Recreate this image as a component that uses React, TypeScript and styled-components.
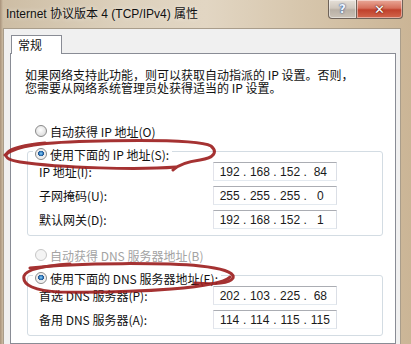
import React from 'react'
import styled, { createGlobalStyle } from 'styled-components'

const GlobalStyle = createGlobalStyle`
  html, body {
    margin: 0;
    padding: 0;
  }
  body {
    width: 411px;
    height: 344px;
    overflow: hidden;
    background: #d8c9b2;
  }
`

const cjk = `"Noto Sans CJK SC", "Noto Sans", sans-serif`

const Window = styled.div`
  position: relative;
  width: 411px;
  height: 344px;
  overflow: hidden;
  display: flex;
  flex-direction: column;
  font-family: ${cjk};
  background: linear-gradient(90deg, #a8927a 0px, #cdbda4 3px, #ddd1bd 30%, #e2d6c3 50%, #d6c5ab 75%, #cbb596 100%);
`

const TitleBar = styled.div`
  flex: none;
  height: 28px;
  display: flex;
  align-items: flex-start;
`

const Title = styled.div`
  flex: 1;
  padding-left: 6px;
  font-family: "Liberation Sans", ${cjk};
  font-size: 12px;
  line-height: 28px;
  color: #111;
  white-space: nowrap;
  text-shadow: 0 0 5px rgba(255, 255, 255, 0.7);
`

const CaptionButtons = styled.div`
  display: flex;
  margin-right: 8px;
`

const CaptionButton = styled.div<{ $close?: boolean }>`
  width: ${p => (p.$close ? 46 : 29)}px;
  height: 19px;
  box-sizing: border-box;
  display: flex;
  align-items: center;
  justify-content: center;
  border: 1px solid #6e6258;
  border-top: none;
  border-left: ${p => (p.$close ? 'none' : '1px solid #6e6258')};
  border-radius: ${p => (p.$close ? '0 0 4px 0' : '0 0 0 4px')};
  background: ${p =>
    p.$close
      ? 'linear-gradient(180deg, #e9a898 0%, #d6705c 45%, #c0412c 55%, #d2664c 100%)'
      : 'linear-gradient(180deg, #e6e0d8 0%, #cfc7bd 45%, #b9b0a5 55%, #cbc3b8 100%)'};
  box-shadow: inset 0 0 0 1px rgba(255, 255, 255, 0.45);
  font-family: "DejaVu Sans", sans-serif;
  font-weight: bold;
  font-size: ${p => (p.$close ? 13 : 12)}px;
  color: ${p => (p.$close ? '#fff' : '#eef4ff')};
  text-shadow: ${p =>
    p.$close
      ? '0 0 2px #5a1a10, 0 0 1px #5a1a10'
      : '0 0 2px #2b4f8c, 0 0 1px #2b4f8c'};
`

const Client = styled.div`
  flex: 1;
  margin-left: 3px;
  width: 398px;
  box-sizing: border-box;
  display: flex;
  flex-direction: column;
  padding: 6px 0 0 6px;
  background: #f0f0f0;
  border: 1px solid #a99d8b;
  border-bottom: none;
`

const TabStrip = styled.div`
  display: flex;
  padding-left: 1px;
`

const Tab = styled.div`
  position: relative;
  z-index: 1;
  width: 51px;
  height: 19px;
  box-sizing: border-box;
  margin-bottom: -1px;
  padding-left: 6px;
  border: 1px solid #898c95;
  border-bottom: none;
  background: #fff;
  font-size: 12px;
  line-height: 18px;
  color: #111;
`

const Panel = styled.div`
  flex: 1;
  width: 386px;
  box-sizing: border-box;
  padding: 14px 0 0 14px;
  border: 1px solid #898c95;
  background: #fff;
`

const Intro = styled.p`
  margin: 0;
  font-size: 12px;
  line-height: 13px;
  color: #111;
  white-space: nowrap;
`

const OptionRow = styled.div<{ $gap: number }>`
  margin-top: ${p => p.$gap}px;
  height: 20px;
  display: flex;
  align-items: center;
  padding-left: 10px;
`

const Option = styled.span<{ $disabled?: boolean }>`
  display: inline-flex;
  align-items: center;
  gap: 3px;
  height: 20px;
  font-size: 12px;
  color: ${p => (p.$disabled ? '#a3a3a3' : '#111')};
  white-space: nowrap;
`

const RadioDot = styled.span<{ $checked?: boolean; $disabled?: boolean }>`
  width: 12px;
  height: 12px;
  box-sizing: border-box;
  border-radius: 50%;
  border: 1px solid ${p => (p.$disabled ? '#c6c6c6' : '#8a8a8a')};
  background: ${p =>
    p.$checked
      ? 'radial-gradient(circle at 50% 45%, #8fd0f5 0, #3a86c8 22%, #1b4f8c 36%, #e8e8e8 40%, #ffffff 100%)'
      : p.$disabled
        ? '#f4f4f4'
        : 'radial-gradient(circle at 45% 40%, #ffffff 0, #e6e6e6 55%, #cfcfcf 100%)'};
`

const Group = styled.fieldset`
  margin: 0 0 0 2px;
  width: 356px;
  min-inline-size: 0;
  box-sizing: border-box;
  padding: 1px 0 6px 5px;
  border: 1px solid #d3dce3;
  border-radius: 3px;
`

const GroupLegend = styled.legend`
  padding: 0 3px 0 2px;
  height: 20px;
`

const Fields = styled.div`
  display: flex;
  flex-direction: column;
  gap: 5px;
`

const FieldRow = styled.div`
  height: 19px;
  display: flex;
  align-items: center;
  padding-left: 6px;
`

const FieldLabel = styled.span`
  width: 174px;
  font-size: 12px;
  color: #111;
  white-space: nowrap;
`

const IpBox = styled.div`
  width: 124px;
  height: 19px;
  box-sizing: border-box;
  display: flex;
  align-items: center;
  padding: 0 3px;
  border: 1px solid;
  border-color: #abadb3 #dbdfe6 #e3e9ef #e2e3ea;
  background: #fff;
  font-family: "Liberation Sans", Arial, sans-serif;
  font-size: 12px;
  color: #1a1a1a;
`

const Octet = styled.span`
  width: 26px;
  text-align: center;
`

const Dot = styled.span`
  width: 5px;
  text-align: center;
`

const Scribble = styled.svg`
  position: absolute;
  left: 0;
  top: 0;
  pointer-events: none;
`

const IpField = ({ value }: { value: string }) => {
  const parts = value.split('.')
  return (
    <IpBox>
      {parts.map((p, i) => (
        <React.Fragment key={i}>
          {i > 0 && <Dot>.</Dot>}
          <Octet>{p}</Octet>
        </React.Fragment>
      ))}
    </IpBox>
  )
}

const Radio = ({ label, checked, disabled }: { label: string; checked?: boolean; disabled?: boolean }) => (
  <Option $disabled={disabled}>
    <RadioDot $checked={checked} $disabled={disabled} />
    {label}
  </Option>
)

const ipRows = [
  { label: 'IP 地址(I):', value: '192.168.152.84' },
  { label: '子网掩码(U):', value: '255.255.255.0' },
  { label: '默认网关(D):', value: '192.168.152.1' },
]

const dnsRows = [
  { label: '首选 DNS 服务器(P):', value: '202.103.225.68' },
  { label: '备用 DNS 服务器(A):', value: '114.114.115.115' },
]

export default function App() {
  return (
    <Window>
      <GlobalStyle />
      <TitleBar>
        <Title>Internet 协议版本 4 (TCP/IPv4) 属性</Title>
        <CaptionButtons>
          <CaptionButton>?</CaptionButton>
          <CaptionButton $close>✕</CaptionButton>
        </CaptionButtons>
      </TitleBar>
      <Client>
        <TabStrip>
          <Tab>常规</Tab>
        </TabStrip>
        <Panel>
          <Intro>
            如果网络支持此功能，则可以获取自动指派的 IP 设置。否则，
            <br />
            您需要从网络系统管理员处获得适当的 IP 设置。
          </Intro>

          <OptionRow $gap={27}>
            <Radio label="自动获得 IP 地址(O)" />
          </OptionRow>
          <Group>
            <GroupLegend>
              <Radio label="使用下面的 IP 地址(S):" checked />
            </GroupLegend>
            <Fields>
              {ipRows.map(r => (
                <FieldRow key={r.label}>
                  <FieldLabel>{r.label}</FieldLabel>
                  <IpField value={r.value} />
                </FieldRow>
              ))}
            </Fields>
          </Group>

          <OptionRow $gap={9}>
            <Radio label="自动获得 DNS 服务器地址(B)" disabled />
          </OptionRow>
          <Group>
            <GroupLegend>
              <Radio label="使用下面的 DNS 服务器地址(E):" checked />
            </GroupLegend>
            <Fields>
              {dnsRows.map(r => (
                <FieldRow key={r.label}>
                  <FieldLabel>{r.label}</FieldLabel>
                  <IpField value={r.value} />
                </FieldRow>
              ))}
            </Fields>
          </Group>
        </Panel>
      </Client>

      <Scribble width="411" height="344" viewBox="0 0 411 344">
        <g fill="none" stroke="#9c1c1c" strokeWidth="3" strokeLinecap="round" strokeLinejoin="round" opacity="0.9">
          <path d="M 5 155 C 15 146, 40 142, 100 141 C 150 140, 200 140, 211 146 C 218 152, 214 158, 200 160 C 185 162, 178 165, 173 170" />
          <path d="M 176 167 C 140 170, 60 168, 20 162 C 8 160, 3 157, 8 152 C 12 148, 25 145, 45 143" />
          <path d="M 30 268 C 80 262, 170 263, 200 266 C 220 268, 235 272, 233 278 C 230 283, 215 285, 195 283" />
          <path d="M 230 277 C 220 288, 140 293, 60 292 C 35 291, 22 285, 24 276 C 26 270, 40 266, 70 264" />
        </g>
      </Scribble>
    </Window>
  )
}
